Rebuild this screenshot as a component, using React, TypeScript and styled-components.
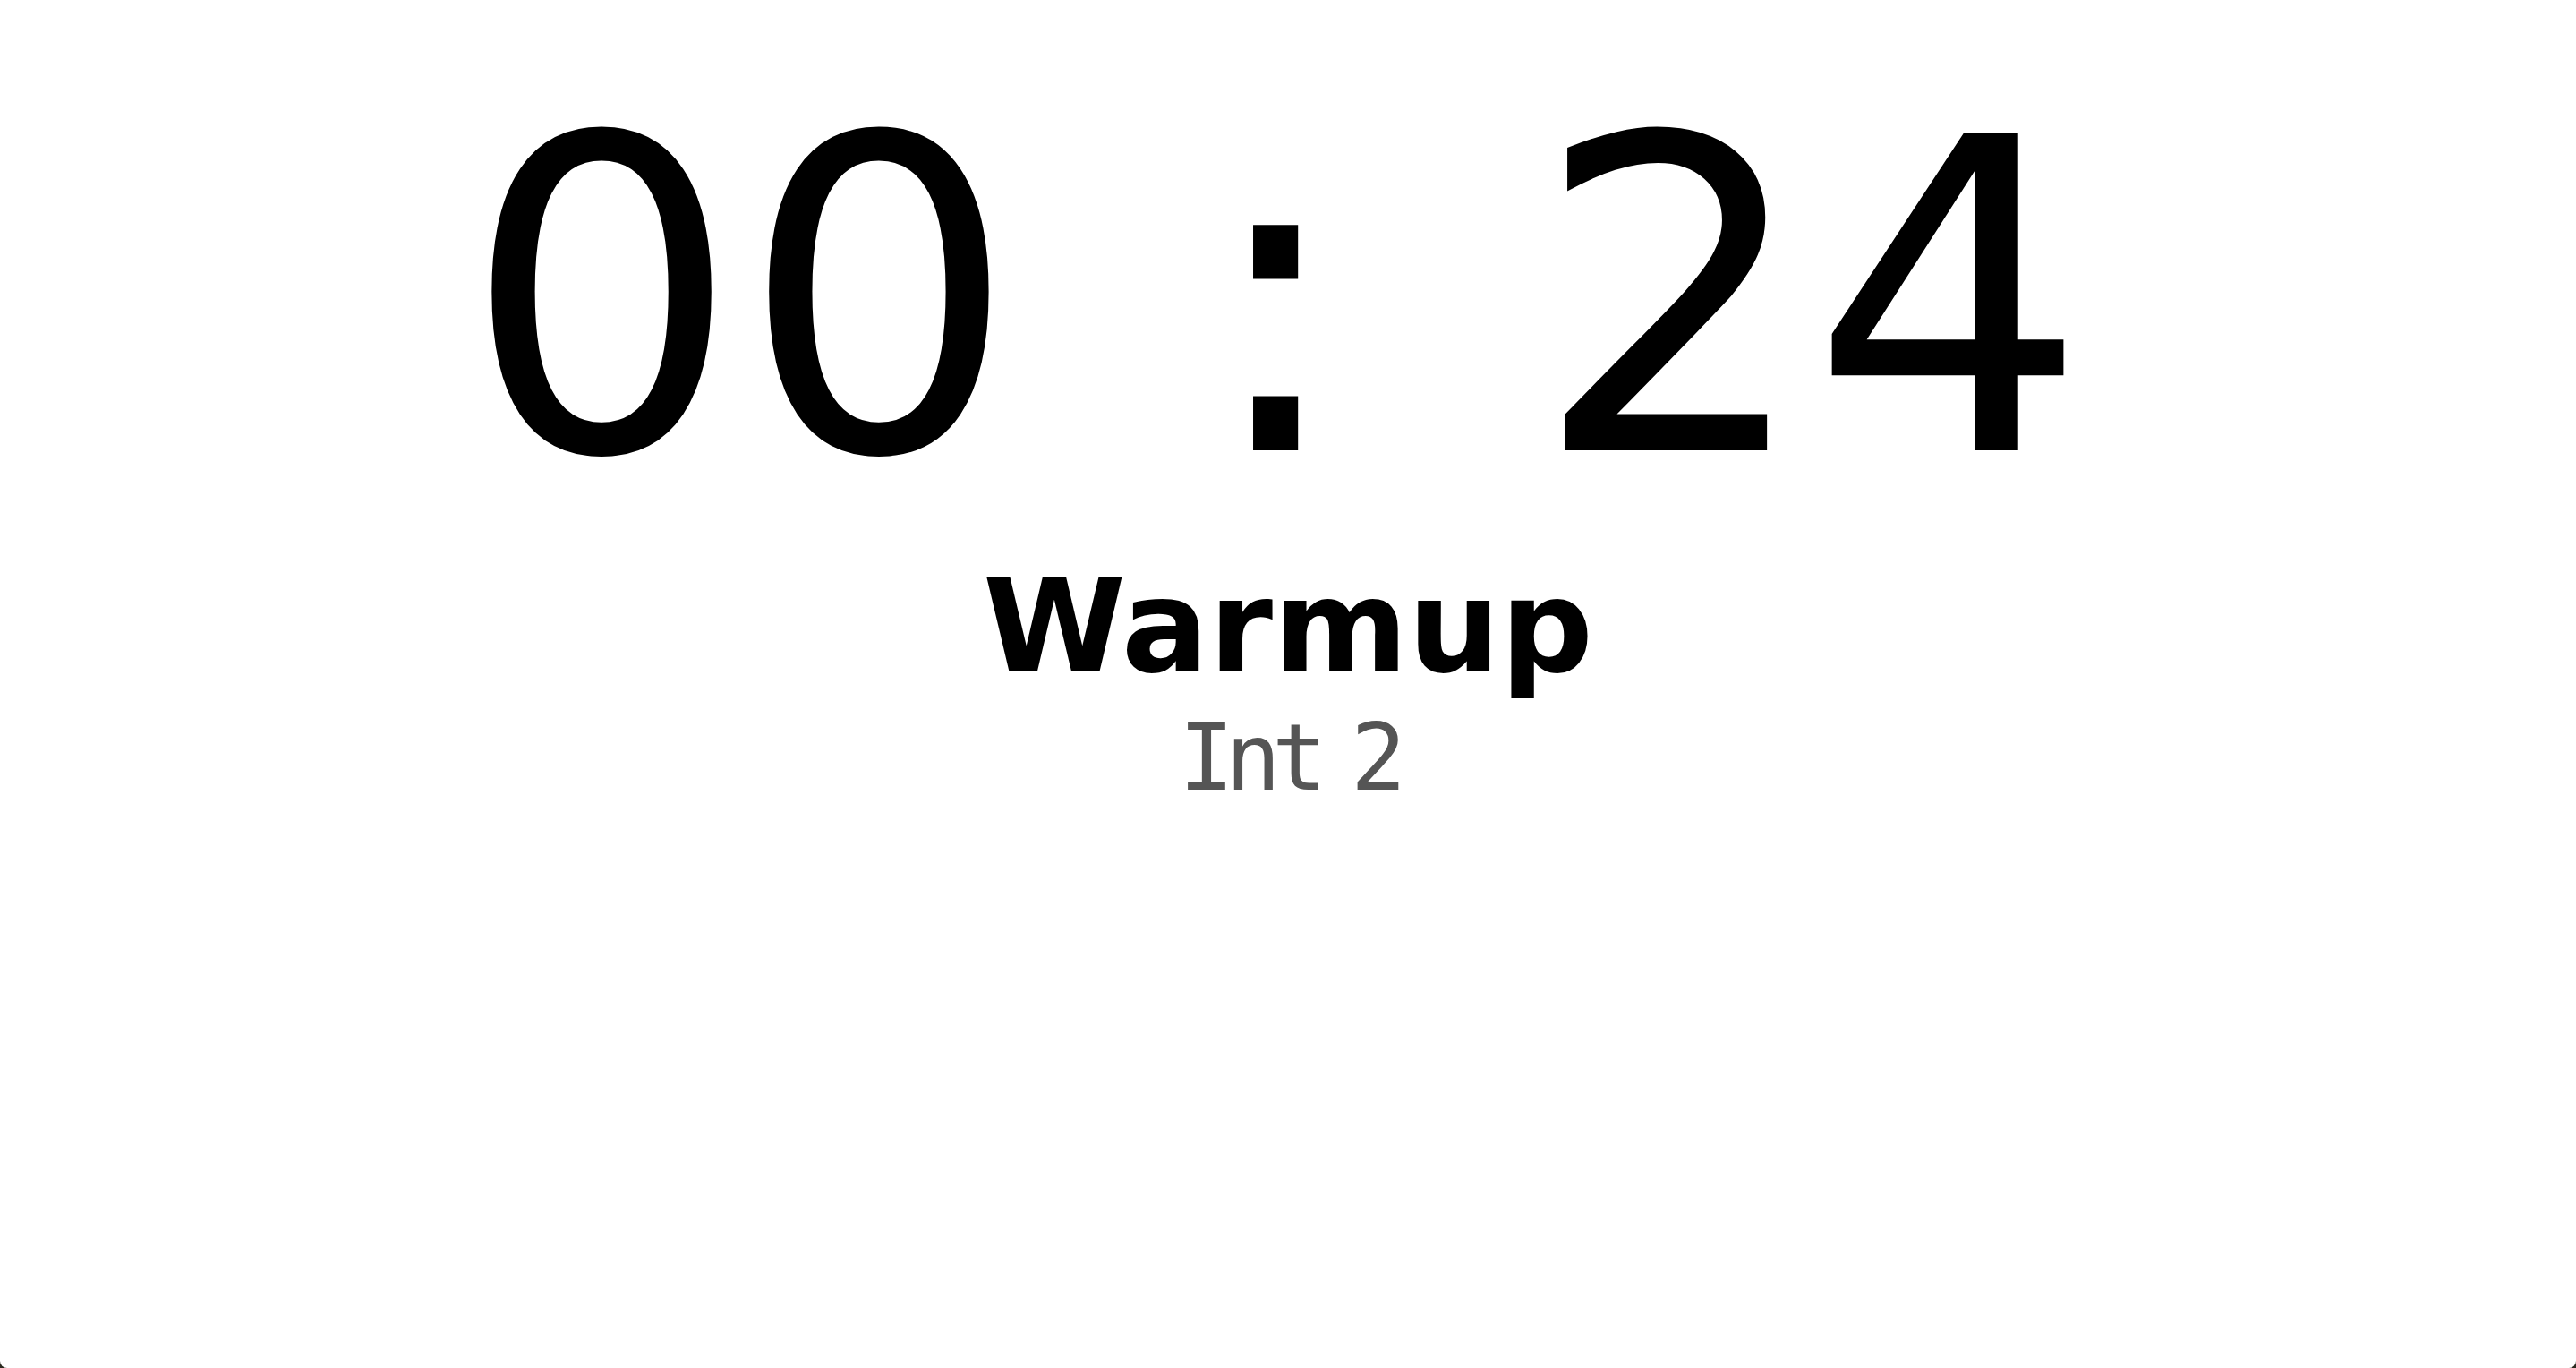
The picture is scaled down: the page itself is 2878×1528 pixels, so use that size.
import React from "react";
import styled, { createGlobalStyle } from "styled-components";

const Global = createGlobalStyle`
  html, body {
    margin: 0;
    padding: 0;
    background: #2b2a20;
  }
  body {
    font-family: "DejaVu Sans", Verdana, sans-serif;
  }
`;

const Screen = styled.main`
  box-sizing: border-box;
  height: 100vh;
  background: #ffffff;
  border-radius: 0 0 8px 8px;
  display: flex;
  flex-direction: column;
  align-items: center;
  padding-top: 91px;
`;

const Clock = styled.div`
  display: flex;
  align-items: baseline;
  justify-content: center;
  gap: 206px;
  padding-right: 28px;
  font-family: "DejaVu Sans", Verdana, sans-serif;
  font-size: 487px;
  line-height: 1;
  color: #000;
`;

const Segment = styled.span`
  display: block;
`;

const Phase = styled.h1`
  margin: 49px 0 0;
  font-family: "DejaVu Sans", Verdana, sans-serif;
  font-weight: 700;
  font-size: 145px;
  line-height: 1;
  color: #000;
`;

const Interval = styled.div`
  margin-top: 23px;
  font-family: "DejaVu Sans Mono", monospace;
  font-size: 103px;
  letter-spacing: -10px;
  word-spacing: -16px;
  line-height: 1;
  color: #555555;
`;

export default function App() {
  return (
    <>
      <Global />
      <Screen>
        <Clock>
          <Segment>00</Segment>
          <Segment>:</Segment>
          <Segment>24</Segment>
        </Clock>
        <Phase>Warmup</Phase>
        <Interval>Int 2</Interval>
      </Screen>
    </>
  );
}
